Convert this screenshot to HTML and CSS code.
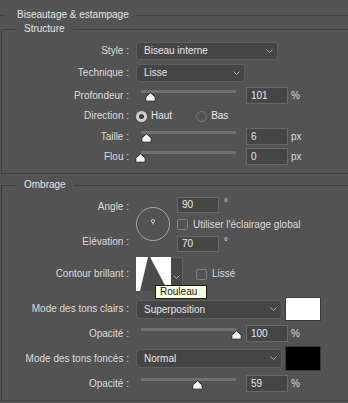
FILE: index.html
```html
<!DOCTYPE html>
<html lang="fr">
<head>
    <meta charset="UTF-8">
    <title>Biseautage &amp; estampage</title>
    <link rel="stylesheet" href="styles.css">
</head>
<body>
    <div class="title-row"><span class="title">Biseautage &amp; estampage</span></div>

    <fieldset class="group structure">
        <legend>Structure</legend>

        <div class="row row-style">
            <span class="lbl">Style :</span>
            <div class="select sel-style">Biseau interne
                <svg class="chev" width="7" height="4" viewBox="0 0 7 4"><polyline points="0.5,0.5 3.5,3.5 6.5,0.5"/></svg>
            </div>
        </div>
        <div class="row row-tech">
            <span class="lbl">Technique :</span>
            <div class="select sel-tech">Lisse
                <svg class="chev" width="7" height="4" viewBox="0 0 7 4"><polyline points="0.5,0.5 3.5,3.5 6.5,0.5"/></svg>
            </div>
        </div>
        <div class="row row-slider first-slider">
            <span class="lbl">Profondeur :</span>
            <div class="slider">
                <div class="track"></div>
                <svg class="thumb" style="left: 3.5px" width="11" height="10" viewBox="0 0 11 10"><path d="M5.5 0.8 L10.2 5 L10.2 9.2 L0.8 9.2 L0.8 5 Z"/></svg>
            </div>
            <div class="num">101</div>
            <span class="unit">%</span>
        </div>
        <div class="row row-dir">
            <span class="lbl">Direction :</span>
            <span class="radio on"></span><span class="radio-text">Haut</span>
            <span class="radio bas"></span><span class="radio-text">Bas</span>
        </div>
        <div class="row row-slider">
            <span class="lbl">Taille :</span>
            <div class="slider">
                <div class="track"></div>
                <svg class="thumb" style="left: -0.5px" width="11" height="10" viewBox="0 0 11 10"><path d="M5.5 0.8 L10.2 5 L10.2 9.2 L0.8 9.2 L0.8 5 Z"/></svg>
            </div>
            <div class="num">6</div>
            <span class="unit">px</span>
        </div>
        <div class="row row-slider">
            <span class="lbl">Flou :</span>
            <div class="slider">
                <div class="track"></div>
                <svg class="thumb" style="left: -6.5px" width="11" height="10" viewBox="0 0 11 10"><path d="M5.5 0.8 L10.2 5 L10.2 9.2 L0.8 9.2 L0.8 5 Z"/></svg>
            </div>
            <div class="num">0</div>
            <span class="unit">px</span>
        </div>
    </fieldset>

    <fieldset class="group ombrage">
        <legend>Ombrage</legend>

        <div class="angle-block">
            <div class="lbl-col">
                <span>Angle :</span>
                <span>Elévation :</span>
            </div>
            <div class="dial">
                <svg width="34" height="34" viewBox="0 0 34 34">
                    <circle cx="17" cy="17" r="16.5" class="dial-ring"/>
                    <line x1="17" y1="17.5" x2="17" y2="15.5" class="dial-hand"/>
                    <circle cx="17" cy="14" r="1.6" class="dial-hand"/>
                </svg>
            </div>
            <div class="angle-col">
                <div class="deg-row"><div class="num">90</div><span class="deg">°</span></div>
                <div class="check-row"><span class="check"></span><span>Utiliser l'éclairage global</span></div>
                <div class="deg-row"><div class="num">70</div><span class="deg">°</span></div>
            </div>
        </div>

        <div class="row row-contour">
            <span class="lbl">Contour brillant :</span>
            <div class="contour">
                <svg width="35" height="34" viewBox="0 0 35 34">
                    <rect width="35" height="34" fill="#ffffff"/>
                    <polygon points="4,34 12,0 14,0 32,34" fill="#4b4b4b"/>
                </svg>
            </div>
            <div class="contour-btn">
                <svg class="chev" width="7" height="4" viewBox="0 0 7 4"><polyline points="0.5,0.5 3.5,3.5 6.5,0.5"/></svg>
            </div>
            <span class="check lisse"></span><span>Lissé</span>
            <div class="tooltip">Rouleau</div>
        </div>

        <div class="row row-mode">
            <span class="lbl">Mode des tons clairs :</span>
            <div class="select sel-mode">Superposition
                <svg class="chev" width="7" height="4" viewBox="0 0 7 4"><polyline points="0.5,0.5 3.5,3.5 6.5,0.5"/></svg>
            </div>
            <div class="swatch white"></div>
        </div>
        <div class="row row-slider row-op">
            <span class="lbl">Opacité :</span>
            <div class="slider">
                <div class="track"></div>
                <svg class="thumb" style="left: 89.5px" width="11" height="10" viewBox="0 0 11 10"><path d="M5.5 0.8 L10.2 5 L10.2 9.2 L0.8 9.2 L0.8 5 Z"/></svg>
            </div>
            <div class="num">100</div>
            <span class="unit">%</span>
        </div>
        <div class="row row-mode row-mode2">
            <span class="lbl">Mode des tons foncés :</span>
            <div class="select sel-mode">Normal
                <svg class="chev" width="7" height="4" viewBox="0 0 7 4"><polyline points="0.5,0.5 3.5,3.5 6.5,0.5"/></svg>
            </div>
            <div class="swatch black"></div>
        </div>
        <div class="row row-slider row-op2">
            <span class="lbl">Opacité :</span>
            <div class="slider">
                <div class="track"></div>
                <svg class="thumb" style="left: 50.5px" width="11" height="10" viewBox="0 0 11 10"><path d="M5.5 0.8 L10.2 5 L10.2 9.2 L0.8 9.2 L0.8 5 Z"/></svg>
            </div>
            <div class="num">59</div>
            <span class="unit">%</span>
        </div>
    </fieldset>
</body>
</html>
```

FILE: styles.css
```css
body {
    margin: 0;
    width: 348px;
    height: 403px;
    overflow: hidden;
    background-color: #535353;
    color: #dcdcdc;
    font-family: "Liberation Sans", Arial, sans-serif;
    font-size: 10px;
    line-height: 14px;
}

/* titre */
.title-row {
    display: flex;
    align-items: center;
    padding-top: 8px;
    height: 14px;
}

.title-row::before,
.title-row::after {
    content: "";
    border-top: 1px solid #3f3f3f;
    height: 0;
}

.title-row::before {
    width: 5px;
    margin-right: 12px;
}

.title-row::after {
    flex: 1;
    margin-left: 7px;
}

.title {
    color: #e4e4e4;
}

/* groupes */
.group {
    margin: 0 0 0 1px;
    padding: 0 0 8px 0;
    width: 347px;
    box-sizing: border-box;
    border: 1px solid #3f3f3f;
    border-right: none;
    min-width: 0;
}

.group legend {
    margin-left: 14px;
    padding: 0 8px;
    line-height: 14px;
    color: #e4e4e4;
}

.structure {
    padding-top: 6px;
}

.ombrage {
    margin-top: 4px;
    padding-top: 5px;
}

.row {
    display: flex;
    align-items: center;
}

.lbl {
    flex: none;
    width: 127px;
    margin-right: 7px;
    text-align: right;
}

/* listes */
.select {
    position: relative;
    box-sizing: border-box;
    height: 18px;
    line-height: 16px;
    padding-left: 7px;
    background-color: #454545;
    border: 1px solid #5e5e5e;
    border-radius: 3px;
    color: #e6e6e6;
}

.sel-style {
    width: 142px;
}

.sel-tech {
    width: 109px;
}

.sel-mode {
    width: 146px;
    height: 19px;
    line-height: 17px;
}

.chev {
    position: absolute;
    right: 4px;
    top: 6px;
}

.chev polyline {
    fill: none;
    stroke: #a8a8a8;
    stroke-width: 1;
}

.row-tech {
    margin-top: 4px;
}

/* curseurs */
.row-slider {
    height: 17px;
    margin-top: 3px;
}

.first-slider {
    margin-top: 5px;
}

.slider {
    position: relative;
    align-self: stretch;
    width: 95px;
    margin-left: 5px;
}

.track {
    margin-top: 3px;
    height: 3px;
    background-color: #707070;
}

.thumb {
    position: absolute;
    top: 5px;
}

.thumb path {
    fill: #f2f2f2;
    stroke: #2a2a2a;
    stroke-width: 1;
    stroke-linejoin: round;
}

.num {
    box-sizing: border-box;
    width: 42px;
    height: 17px;
    line-height: 15px;
    margin-left: 10px;
    padding-left: 4px;
    background-color: #454545;
    border: 1px solid #686868;
    color: #e8e8e8;
}

.unit {
    margin-left: 3px;
}

/* direction */
.row-dir {
    height: 18px;
    margin-top: 3px;
}

.radio {
    box-sizing: border-box;
    width: 11px;
    height: 11px;
    border-radius: 50%;
    margin-right: 4px;
    border: 1px solid #7a7a7a;
}

.radio.on {
    border: 3px solid #cfcfcf;
    background-color: #3a3a3a;
}

.radio.bas {
    margin-left: 24px;
}

.radio-text {
    color: #e8e8e8;
}

/* angle */
.angle-block {
    display: flex;
    height: 55px;
}

.lbl-col {
    width: 127px;
    margin-right: 7px;
    padding: 3px 0;
    display: flex;
    flex-direction: column;
    justify-content: space-between;
    align-items: flex-end;
}

.dial {
    width: 34px;
    height: 34px;
    margin-top: 10px;
    margin-right: 7px;
}

.dial-ring {
    fill: none;
    stroke: #a4a4a4;
    stroke-width: 1;
}

.dial-hand {
    fill: none;
    stroke: #c8c8c8;
    stroke-width: 1;
}

.angle-col {
    display: grid;
    grid-template-rows: 16px 23px 16px;
}

.deg-row {
    display: flex;
    align-items: flex-start;
}

.deg-row .num {
    margin-left: 0;
    height: 16px;
    line-height: 14px;
}

.deg {
    margin-left: 5px;
    line-height: 12px;
}

.check-row {
    display: flex;
    align-items: center;
}

.check {
    box-sizing: border-box;
    width: 11px;
    height: 11px;
    border: 1px solid #7e7e7e;
    border-radius: 2px;
    margin-right: 5px;
}

/* contour */
.row-contour {
    position: relative;
    margin-top: 5px;
    height: 34px;
}

.contour {
    width: 35px;
    height: 34px;
}

.contour svg {
    display: block;
}

.contour-btn {
    position: relative;
    box-sizing: border-box;
    width: 12px;
    height: 34px;
    background-color: #484848;
    border: 1px solid #5e5e5e;
    border-left: none;
}

.contour-btn .chev {
    right: 2px;
    top: 17px;
}

.check.lisse {
    margin-left: 13px;
}

.tooltip {
    position: absolute;
    left: 153px;
    top: 28px;
    box-sizing: border-box;
    width: 52px;
    height: 14px;
    line-height: 12px;
    padding-left: 4px;
    background-color: #ffffe1;
    border: 1px solid #1a1a1a;
    color: #111111;
}

/* modes */
.row-mode {
    height: 24px;
    margin-top: 6px;
}

.row-mode2 {
    margin-top: 4px;
    height: 25px;
}

.swatch {
    box-sizing: border-box;
    width: 36px;
    height: 24px;
    margin-left: 3px;
    border: 1px solid #3a3a3a;
}

.row-mode2 .swatch {
    height: 25px;
}

.swatch.white {
    background-color: #ffffff;
}

.swatch.black {
    background-color: #000000;
}

.row-op,
.row-op2 {
    margin-top: 4px;
}
```
